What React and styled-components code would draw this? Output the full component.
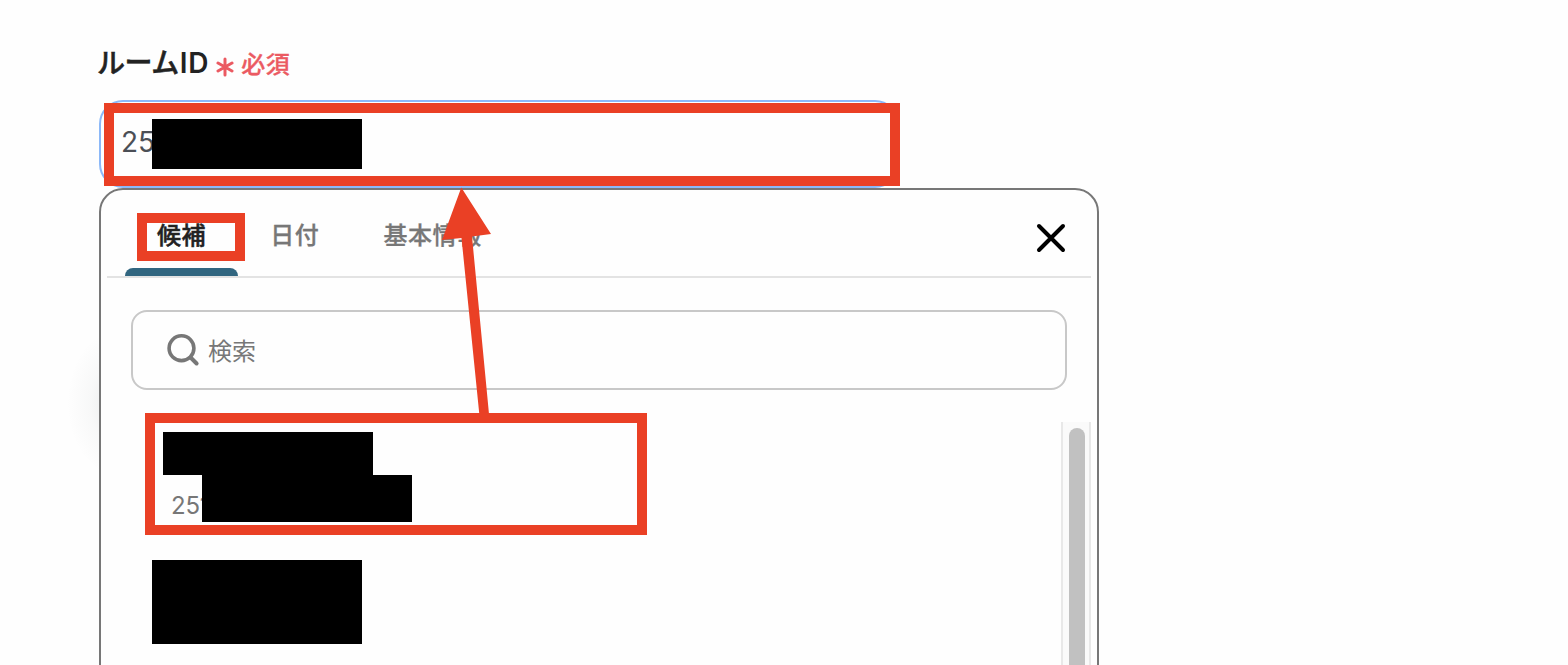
import styled, { createGlobalStyle } from "styled-components";

const GlobalStyle = createGlobalStyle`
  * {
    box-sizing: border-box;
  }

  body {
    margin: 0;
    background: #fefefe;
    font-family: Inter, "Noto Sans CJK JP", sans-serif;
    overflow: hidden;
  }
`;

const Page = styled.main`
  position: relative;
  width: 1568px;
  height: 665px;
  padding: 42px 0 0 99px;
  overflow: hidden;
`;

const Label = styled.label`
  display: flex;
  align-items: center;
  height: 42px;
  color: #222;
  font-size: 28px;
  font-weight: 600;
  line-height: 42px;
  white-space: nowrap;
`;

const Kana = styled.span`
  font-family: "Noto Sans CJK JP", sans-serif;
  font-weight: 500;
  -webkit-text-stroke: 0.5px currentColor;
  letter-spacing: -0.5px;
  margin: -4px 0 0 -2px;
`;

const Latin = styled.span`
  margin-left: 1px;
  letter-spacing: 0.8px;
`;

const Required = styled.span`
  display: flex;
  align-items: center;
  gap: 7px;
  margin: 3px 0 0 7px;
  color: #eb5a62;
  font-size: 24px;
  font-weight: 500;
  -webkit-text-stroke: 0.3px currentColor;
  letter-spacing: 0.5px;

  svg {
    margin-top: 4px;
  }
`;

const Field = styled.div`
  display: flex;
  align-items: flex-start;
  width: 800px;
  height: 88px;
  margin-top: 16px;
  padding: 17px 20px;
  border: 2px solid #8bb8f8;
  border-radius: 24px;
`;

const FieldValue = styled.span`
  width: 31px;
  color: #4b4f56;
  font-size: 28px;
  letter-spacing: 0;
  line-height: 46px;
  white-space: nowrap;
`;

const Mask = styled.span`
  position: relative;
  display: block;
  flex: none;
  width: 210px;
  height: ${(props) => props.$height}px;
  background: #000;
`;

const Popover = styled.section`
  position: relative;
  width: 1000px;
  height: 520px;
  padding: 0 6px;
  background: #fefefe;
  border: 2px solid #777;
  border-radius: 24px;
`;

const Glow = styled.div`
  position: absolute;
  left: 67px;
  top: 330px;
  width: 50px;
  height: 146px;
  background: radial-gradient(
    ellipse 50px 73px at 50px 50%,
    rgba(60, 70, 70, 0.11),
    rgba(60, 70, 70, 0.03) 55%,
    transparent
  );
`;

const TabBar = styled.div`
  display: flex;
  justify-content: space-between;
  height: 88px;
  padding: 0 24px 0 18px;
  border-bottom: 2px solid #e3e3e3;
`;

const Tabs = styled.div`
  display: flex;
`;

const Tab = styled.button`
  display: flex;
  flex-direction: column;
  justify-content: space-between;
  padding: 25px 0 0;
  border: 0;
  background: none;
  color: ${(props) => (props.$active ? "#222" : "#777")};
  font: 500 24px/38px "Noto Sans CJK JP", sans-serif;
  -webkit-text-stroke: ${(props) => (props.$active ? 0.5 : 0.3)}px currentColor;
  letter-spacing: 0.6px;

  span {
    padding: 0 32px;
  }

  &::after {
    content: "";
    width: 100%;
    height: 8px;
    border-radius: 8px 8px 0 0;
    background: ${(props) => (props.$active ? "#316680" : "transparent")};
  }
`;

const CloseButton = styled.button`
  height: 32px;
  margin-top: 32px;
  padding: 0;
  border: 0;
  background: none;
`;

const SearchBox = styled.div`
  display: flex;
  align-items: center;
  width: 936px;
  height: 80px;
  margin: 32px 0 0 24px;
  padding-left: 33px;
  border: 2px solid #c8c8c8;
  border-radius: 16px;
  color: #777;
  font-size: 24px;
  gap: 6px;

  span {
    margin-top: -1px;
  }
`;

const Results = styled.div`
  display: flex;
  justify-content: space-between;
  margin-top: 32px;
`;

const Items = styled.div`
  padding: 10px 0 0 45px;
`;

const Item = styled.div`
  margin-left: 11px;
`;

const ItemDetail = styled.div`
  display: flex;
  padding-left: 8px;
`;

const ItemId = styled.span`
  width: 31px;
  color: #777;
  font-size: 24px;
  letter-spacing: -0.2px;
  line-height: 62px;
  height: 47px;
  white-space: nowrap;
`;

const NextItem = styled.div`
  margin-top: 38px;
`;

const ScrollTrack = styled.div`
  width: 30px;
  height: 280px;
  padding: 6px;
  background: #fafafa;
  border: solid #e8e8e8;
  border-width: 0 2px;
`;

const ScrollThumb = styled.div`
  width: 16px;
  height: 274px;
  border-radius: 8px;
  background: #c1c1c1;
`;

const Annotations = styled.div`
  position: absolute;
  inset: 0;
  pointer-events: none;
`;

const Frame = styled.div`
  position: absolute;
  left: ${(props) => props.$x}px;
  top: ${(props) => props.$y}px;
  width: ${(props) => props.$w}px;
  height: ${(props) => props.$h}px;
  border: 10px solid #ea4025;
`;

const Arrow = styled.svg`
  position: absolute;
  left: 440px;
  top: 186px;
`;

const AsteriskIcon = () => (
  <svg width="18" height="20" viewBox="0 0 18 20" aria-hidden="true">
    <path
      d="M9 2v16M2 6l14 8M2 14l14-8"
      fill="none"
      stroke="currentColor"
      strokeWidth="3"
      strokeLinecap="round"
    />
  </svg>
);

const CloseIcon = () => (
  <svg width="32" height="32" viewBox="0 0 32 32" aria-hidden="true">
    <path
      d="M4 4L28 28M28 4L4 28"
      fill="none"
      stroke="#000"
      strokeWidth="4"
      strokeLinecap="round"
    />
  </svg>
);

const SearchIcon = () => (
  <svg width="36" height="36" viewBox="0 0 36 36" aria-hidden="true">
    <g fill="none" stroke="currentColor" strokeWidth="3.6">
      <circle cx="15.5" cy="16.2" r="12.4" />
      <path d="M24.600 25.500l6 6" strokeWidth="4" strokeLinecap="round" />
    </g>
  </svg>
);

const tabs = ["候補", "日付", "基本情報"];

const App = () => {
  return (
    <Page>
      <GlobalStyle />
      <Label>
        <Kana>ルーム</Kana>
        <Latin>ID</Latin>
        <Required>
          <AsteriskIcon />
          必須
        </Required>
      </Label>
      <Field>
        <FieldValue>25</FieldValue>
        <Mask $height={50} />
      </Field>
      <Glow />
      <Popover>
        <TabBar>
          <Tabs>
            {tabs.map((tab, index) => (
              <Tab key={tab} $active={index === 0}>
                <span>{tab}</span>
              </Tab>
            ))}
          </Tabs>
          <CloseButton aria-label="閉じる">
            <CloseIcon />
          </CloseButton>
        </TabBar>
        <SearchBox>
          <SearchIcon />
          <span>検索</span>
        </SearchBox>
        <Results>
          <Items>
            <Item>
              <Mask $height={43} />
              <ItemDetail>
                <ItemId>251</ItemId>
                <Mask $height={47} />
              </ItemDetail>
            </Item>
            <NextItem>
              <Mask $height={84} />
            </NextItem>
          </Items>
          <ScrollTrack>
            <ScrollThumb />
          </ScrollTrack>
        </Results>
      </Popover>
      <Annotations>
        <Frame $x={104} $y={103} $w={796} $h={83} />
        <Frame $x={137} $y={213} $w={108} $h={48} />
        <Frame $x={145} $y={413} $w={502} $h={122} />
        <Arrow width="60" height="236" viewBox="440 186 60 236">
          <path
            d="M461.3 187.5L491 234l-19 2.5L489 414h-9.700L461.500 238l-19.500 2z"
            fill="#ea4025"
          />
        </Arrow>
      </Annotations>
    </Page>
  );
};

export default App;
